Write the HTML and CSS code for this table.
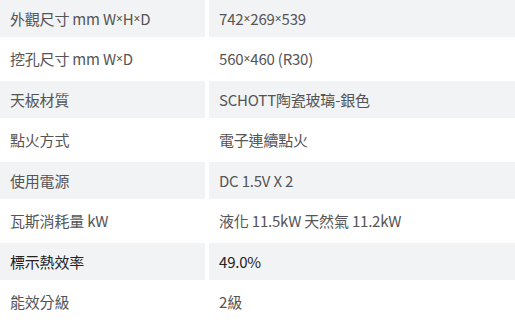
FILE: index.html
```html
<!DOCTYPE html>
<html lang="zh-Hant">
<head>
<meta charset="utf-8">
<link rel="stylesheet" href="styles.css">
</head>
<body>
<div class="spec">
  <div class="row odd"><div class="k">外觀尺寸 mm W<span class="x">×</span>H<span class="x">×</span>D</div><div class="v">742<span class="x">×</span>269<span class="x">×</span>539</div></div>
  <div class="row"><div class="k">挖孔尺寸 mm W<span class="x">×</span>D</div><div class="v">560<span class="x">×</span>460 (R30)</div></div>
  <div class="row odd"><div class="k">天板材質</div><div class="v">SCHOTT陶瓷玻璃-銀色</div></div>
  <div class="row"><div class="k">點火方式</div><div class="v">電子連續點火</div></div>
  <div class="row odd"><div class="k">使用電源</div><div class="v">DC 1.5V X 2</div></div>
  <div class="row"><div class="k">瓦斯消耗量 kW</div><div class="v">液化 11.5kW 天然氣 11.2kW</div></div>
  <div class="row odd strong"><div class="k">標示熱效率</div><div class="v">49.0%</div></div>
  <div class="row"><div class="k">能效分級</div><div class="v">2級</div></div>
</div>
</body>
</html>
```
FILE: styles.css
```css
html, body {
  margin: 0;
  padding: 0;
  background: #ffffff;
}
body {
  font-family: "Noto Sans CJK TC", "Noto Sans", sans-serif;
  font-size: 15px;
  letter-spacing: -0.2px;
  color: #555555;
}
.spec {
  display: flex;
  flex-direction: column;
  gap: 4px;
}
.row {
  display: grid;
  grid-template-columns: 205px 1fr;
  column-gap: 4px;
  height: 36.5px;
}
.k, .v {
  display: flex;
  align-items: center;
  padding-left: 10px;
  white-space: pre;
}
.x {
  font-family: "Noto Sans", sans-serif;
  font-size: 12px;
  letter-spacing: 0;
}
.odd .k, .odd .v {
  background: #f2f3f5;
}
.strong .k, .strong .v {
  color: #222222;
}
```
